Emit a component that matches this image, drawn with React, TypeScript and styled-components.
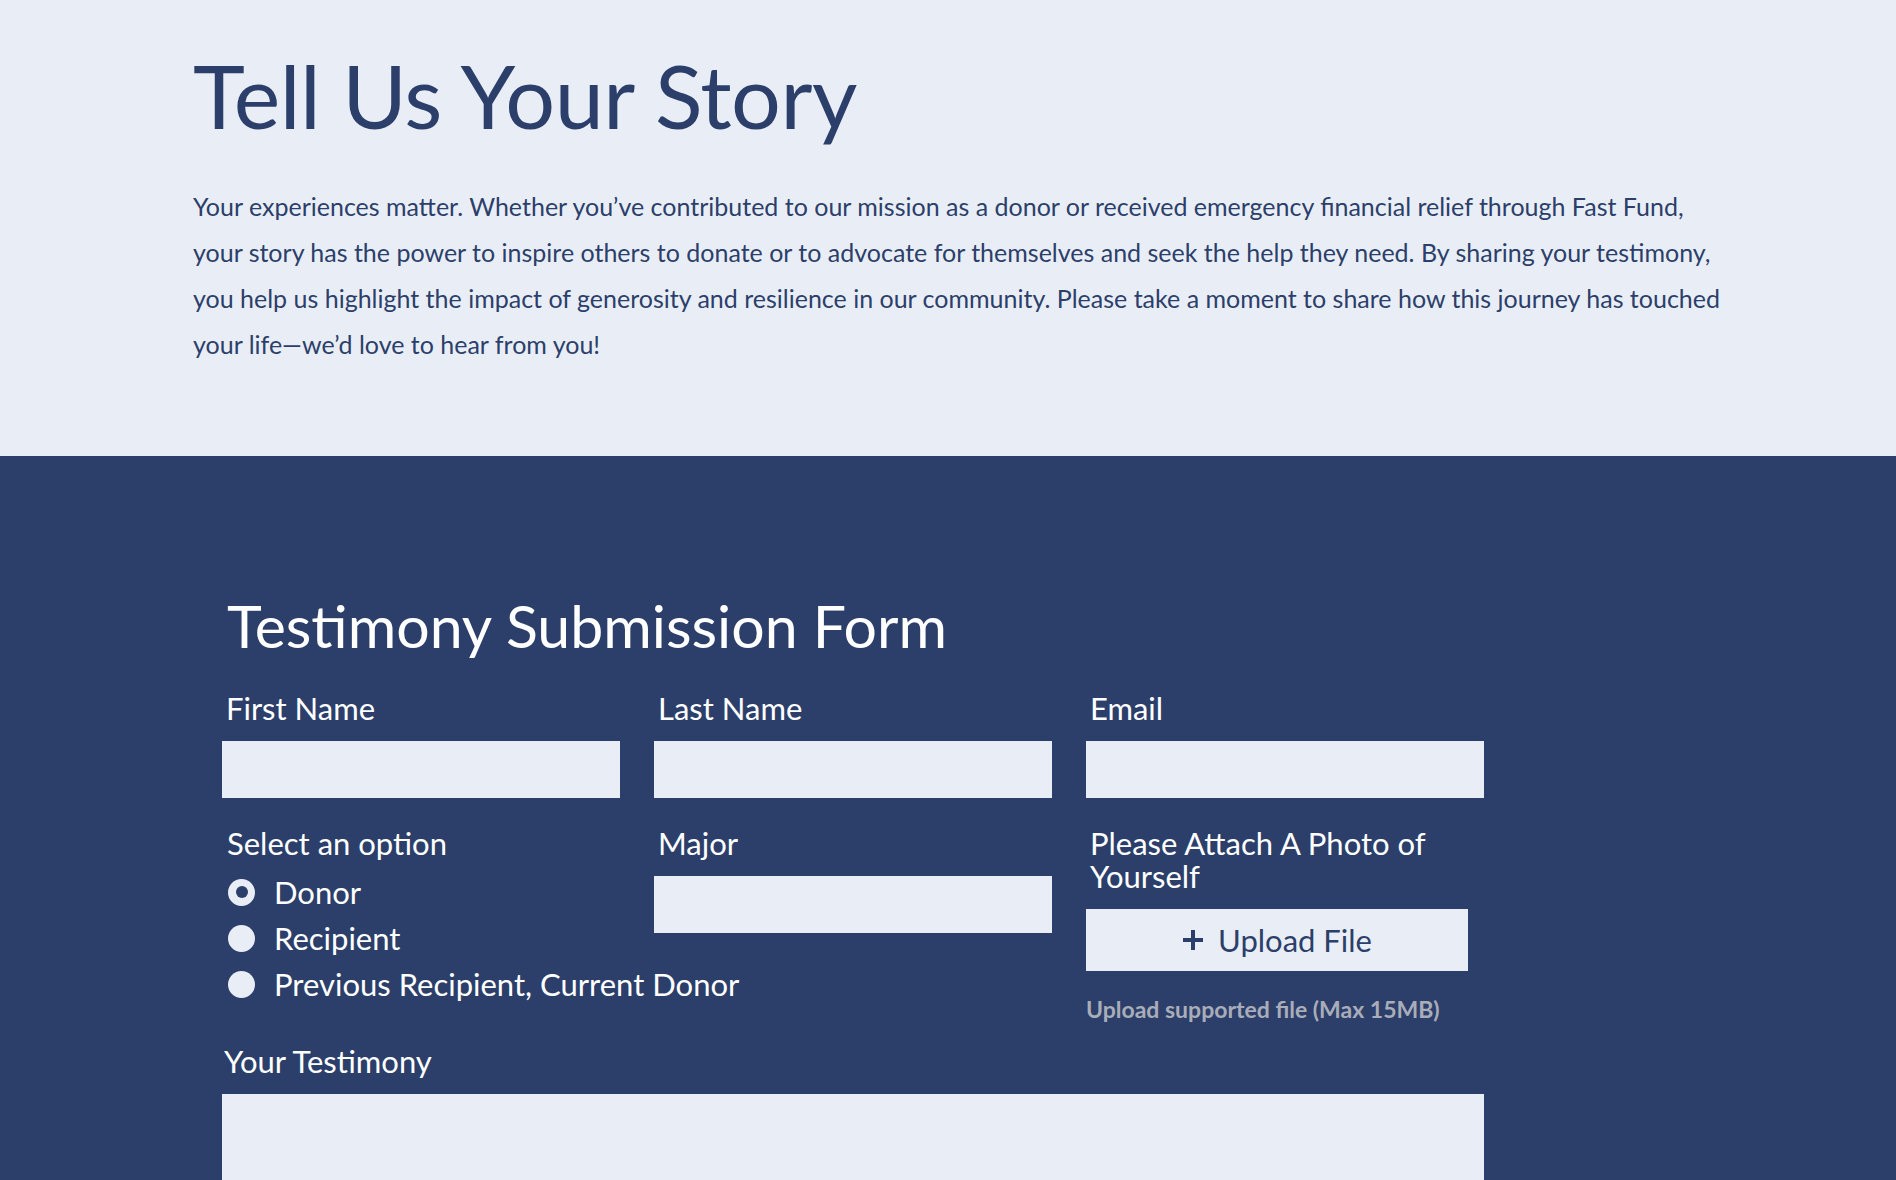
import React from 'react'
import styled, { createGlobalStyle } from 'styled-components'

const navy = '#2c3f6a'
const light = '#e9eef6'

const GlobalStyle = createGlobalStyle`
  html, body {
    margin: 0;
    padding: 0;
    background: ${light};
  }
  body {
    font-family: Lato, 'Open Sans', sans-serif;
  }
  * {
    box-sizing: border-box;
  }
`

function PlusIcon() {
  return (
    <svg width='22' height='22' viewBox='0 0 22 22' aria-hidden='true'>
      <path d='M11 1v20M1 11h20' stroke={navy} strokeWidth='4' fill='none' />
    </svg>
  )
}

type Option = { label: string; checked?: boolean }

const options: Option[] = [
  { label: 'Donor', checked: true },
  { label: 'Recipient' },
  { label: 'Previous Recipient, Current Donor' },
]

function App() {
  return (
    <Page>
      <GlobalStyle />
      <Hero>
        <Title>Tell Us Your Story</Title>
        <Intro>
          Your experiences matter. Whether you’ve contributed to our mission as a donor or received emergency financial
          relief through Fast Fund, your story has the power to inspire others to donate or to advocate for themselves
          and seek the help they need. By sharing your testimony, you help us highlight the impact of generosity and
          resilience in our community. Please take a moment to share how this journey has touched your life—we’d love
          to hear from you!
        </Intro>
      </Hero>
      <FormSection>
        <FormTitle>Testimony Submission Form</FormTitle>
        <FormGrid>
          <Field>
            <Label>First Name</Label>
            <Input type='text' />
          </Field>
          <Field>
            <Label>Last Name</Label>
            <Input type='text' />
          </Field>
          <Field>
            <Label>Email</Label>
            <Input type='email' />
          </Field>
          <Field>
            <Label $inset={5}>Select an option</Label>
            <RadioGroup>
              {options.map((o) => (
                <RadioRow key={o.label}>
                  <RadioDot $checked={!!o.checked} />
                  <RadioText>{o.label}</RadioText>
                </RadioRow>
              ))}
            </RadioGroup>
          </Field>
          <Field>
            <Label>Major</Label>
            <Input type='text' />
          </Field>
          <Field>
            <Label>
              Please Attach A Photo of
              <br />
              Yourself
            </Label>
            <UploadButton type='button'>
              <PlusIcon />
              Upload File
            </UploadButton>
            <Hint>Upload supported file (Max 15MB)</Hint>
          </Field>
          <WideField>
            <Label $inset={2}>Your Testimony</Label>
            <TextArea />
          </WideField>
        </FormGrid>
      </FormSection>
    </Page>
  )
}

export default App

const Page = styled.div`
  width: 100%;
  min-height: 100vh;
`

const Hero = styled.section`
  background: ${light};
  padding: 42px 0 89px 193px;
`

const Title = styled.h1`
  margin: 0;
  font-size: 88px;
  line-height: 106px;
  font-weight: 400;
  color: ${navy};
  letter-spacing: -0.5px;
`

const Intro = styled.p`
  margin: 35px 0 0;
  width: 1527px;
  font-size: 25px;
  line-height: 46px;
  color: ${navy};
`

const FormSection = styled.section`
  background: ${navy};
  padding: 133px 0 120px 222px;
`

const FormTitle = styled.h2`
  margin: 0 0 30px 5px;
  font-size: 59px;
  line-height: 73px;
  font-weight: 400;
  color: #ffffff;
`

const FormGrid = styled.div`
  display: grid;
  grid-template-columns: repeat(3, 398px);
  column-gap: 34px;
  row-gap: 29px;
  align-items: start;
`

const Field = styled.div`
  display: flex;
  flex-direction: column;
`

const WideField = styled(Field)`
  grid-column: 1 / -1;
  margin-top: -6px;
`

const Label = styled.label<{ $inset?: number }>`
  display: block;
  margin: 0 0 16px ${(p) => p.$inset ?? 4}px;
  font-size: 31px;
  line-height: 33px;
  color: #ffffff;
`

const Input = styled.input`
  display: block;
  width: 398px;
  height: 57px;
  border: none;
  border-radius: 0;
  background: ${light};
  outline: none;
`

const RadioGroup = styled.div`
  display: flex;
  flex-direction: column;
  margin: -7px 0 0 6px;
`

const RadioRow = styled.div`
  display: flex;
  align-items: center;
  gap: 19px;
  height: 46px;
`

const RadioDot = styled.span<{ $checked: boolean }>`
  flex: none;
  width: 27px;
  height: 27px;
  border-radius: 50%;
  background: ${light};
  position: relative;

  &::after {
    content: '';
    display: ${(p) => (p.$checked ? 'block' : 'none')};
    position: absolute;
    left: 50%;
    top: 50%;
    width: 12px;
    height: 12px;
    margin: -6px 0 0 -6px;
    border-radius: 50%;
    background: ${navy};
  }
`

const RadioText = styled.span`
  font-size: 31px;
  color: #ffffff;
  white-space: nowrap;
`

const UploadButton = styled.button`
  display: flex;
  align-items: center;
  justify-content: center;
  gap: 14px;
  width: 382px;
  height: 62px;
  border: none;
  border-radius: 0;
  background: ${light};
  color: ${navy};
  font-family: Lato, 'Open Sans', sans-serif;
  font-size: 31px;
  cursor: pointer;
`

const Hint = styled.p`
  margin: 25px 0 0;
  font-size: 23px;
  line-height: 26px;
  font-weight: 700;
  color: #a9adb9;
`

const TextArea = styled.textarea`
  display: block;
  width: 1262px;
  height: 220px;
  border: none;
  border-radius: 0;
  background: ${light};
  resize: none;
  outline: none;
`
